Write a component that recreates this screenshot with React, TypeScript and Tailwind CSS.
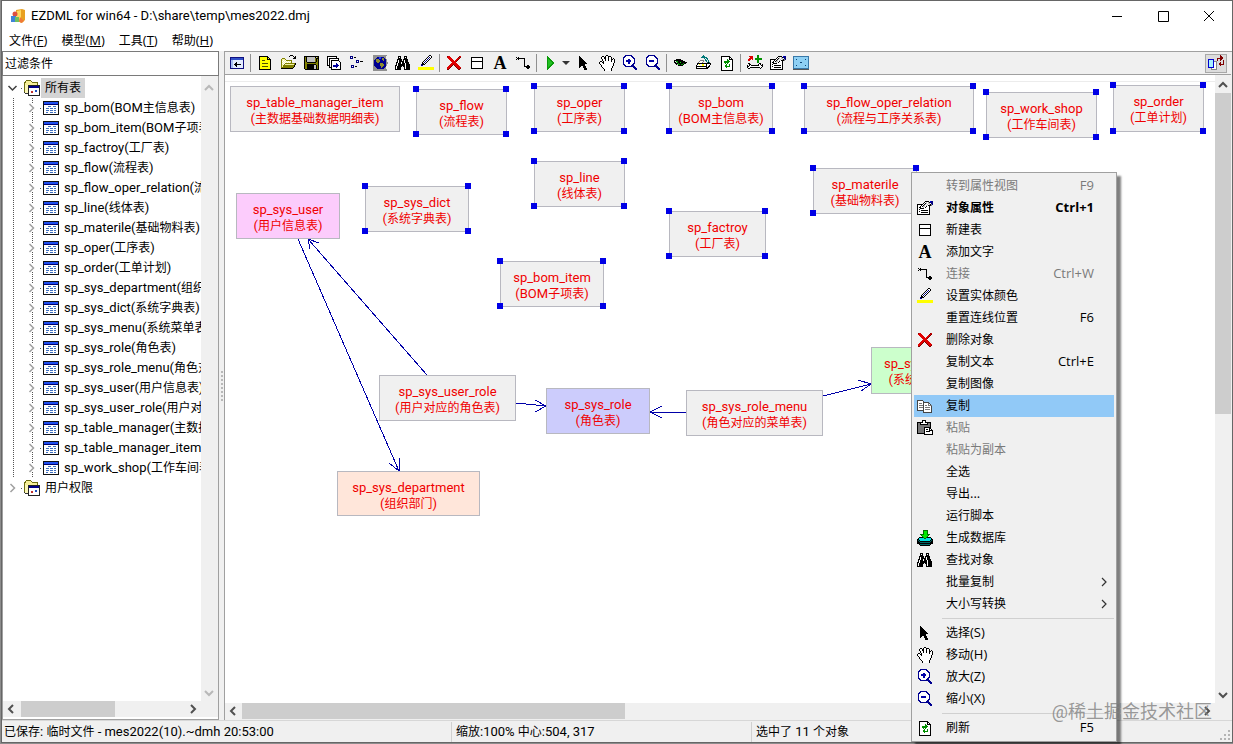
import React from "react";

// Shared types
interface TableNode {
  name: string;
  comment: string;
  x: number;
  y: number;
  w: number;
  h?: number;
  fill?: string;
  selected?: boolean;
}

interface MenuEntry {
  label?: string;
  icon?: React.ReactNode;
  shortcut?: string;
  disabled?: boolean;
  bold?: boolean;
  active?: boolean;
  submenu?: boolean;
  separator?: boolean;
}

// Palette for the 16 colour toolbar bitmaps
const palette: Record<string, string> = {
  k: "#000000",
  w: "#ffffff",
  y: "#ffff00",
  o: "#808000",
  p: "#f4f3a0",
  b: "#0000ff",
  n: "#000080",
  g: "#808080",
  s: "#c0c0c0",
  r: "#e00000",
  m: "#800000",
  e: "#009000",
  l: "#00ee00",
  c: "#00e0e0",
  t: "#007878",
};

const Sprite = ({ rows }: { rows: string[] }) => (
  <svg width="16" height="16" viewBox="0 0 16 16" shapeRendering="crispEdges" className="shrink-0">
    {rows.flatMap((row, y) =>
      [...row].map((ch, x) =>
        palette[ch] ? (
          <rect key={`${x}-${y}`} x={x} y={y} width="1" height="1" fill={palette[ch]} />
        ) : null
      )
    )}
  </svg>
);

const Svg = ({ children }: { children: React.ReactNode }) => (
  <svg width="16" height="16" viewBox="0 0 16 16" fill="none" shapeRendering="crispEdges" className="shrink-0">
    {children}
  </svg>
);

const HandIcon = () => (
  <Sprite
    rows={[
      ".......kk.......",
      "...kk.kwwkkk....",
      "..kwwkkwwkwwk...",
      "..kwwkkwwkwwk.k.",
      "...kwwkwwkwwkkwk",
      "...kwwkwwkwwkwwk",
      ".kk.kwwwwwwwkwwk",
      "kwwkkwwwwwwwwwwk",
      "kwwwkwwwwwwwwwk.",
      ".kwwwwwwwwwwwwk.",
      "..kwwwwwwwwwwwk.",
      "..kwwwwwwwwwwk..",
      "...kwwwwwwwwwk..",
      "....kwwwwwwwk...",
      ".....kwwwwwwk...",
      ".....kwwwwwwk...",
    ]}
  />
);

const CursorIcon = () => (
  <Sprite
    rows={[
      "................",
      "...k............",
      "...kk...........",
      "...kkk..........",
      "...kkkk.........",
      "...kkkkk........",
      "...kkkkkk.......",
      "...kkkkkkk......",
      "...kkkkkkkk.....",
      "...kkkkkk.......",
      "...kkkkkk.......",
      "...kk..kkk......",
      "...k...kkk......",
      "........kkk.....",
      "........kkk.....",
    ]}
  />
);

const FindIcon = () => (
  <Sprite
    rows={[
      "................",
      "...kkk...kkk....",
      "...kwk...kwk....",
      "...kkk...kkk....",
      "..kkkkk.kkkkk...",
      "..kwkkk.kwkkk...",
      "..kwkkkkkwkkk...",
      ".kkwkkwkkwkkkk..",
      ".kwkkkwkkkwkkk..",
      ".kwkkkkkkkwkkkk.",
      "kkwkkkkkkkwkkkk.",
      "kwkkkkk.kkwkkkk.",
      "kwkkkk...kwkkkk.",
      "kwkkkk...kwkkkk.",
      "kkkkkk...kkkkkk.",
    ]}
  />
);

const PenIcon = () => (
  <Sprite
    rows={[
      "...........kk...",
      "..........kwwk..",
      ".........kwnwk..",
      "........kwnwk...",
      ".......kwnwk....",
      "......kwnwk.....",
      ".....kwnwk......",
      "....kwnwk.......",
      "....kkwk........",
      "...nkkk.........",
      "...nn...........",
      "................",
      "yyyyyyyyyyyyyyyy",
      "yyyyyyyyyyyyyyyy",
      "yyyyyyyyyyyyyyyy",
    ]}
  />
);

const DeleteIcon = () => (
  <Sprite
    rows={[
      "................",
      ".mrr.........mr.",
      ".rrrr.......mrm.",
      "..rrrr.....rrm..",
      "...rrrr...rrm...",
      "....rrrr.rrm....",
      ".....rrrrrm.....",
      "......rrrr......",
      ".....rrrrrr.....",
      "....rrrmrrrr....",
      "...rrrm.mrrrr...",
      "..rrrm...mrrrr..",
      ".rrrm.....mrrrr.",
      ".rrm.......mrrm.",
      ".mm.........mm..",
    ]}
  />
);

const OpenIcon = () => (
  <Sprite
    rows={[
      "..........kkk...",
      ".........k...k.k",
      "..............kk",
      "..ooo........kkk",
      ".opppo..........",
      ".opwpwoooooo....",
      ".owpwpwpwpwo....",
      ".opwpwpwpwpo....",
      ".owpwooooooooook",
      ".opwopppppppppok",
      ".opoooooooooook.",
      ".opoooooooooook.",
      ".ooooooooooook..",
      ".kkkkkkkkkkkk...",
    ]}
  />
);

const SaveIcon = () => (
  <Sprite
    rows={[
      "................",
      ".kkkkkkkkkkkkkkk",
      ".kokssssssssksok",
      ".kokssssssssokkk",
      ".kokssssssssokok",
      ".kokssssssssokok",
      ".kokssssssssokok",
      ".kookkkkkkkkkook",
      ".koooooooooooook",
      ".kookkkkkkkkkook",
      ".kookkkkkkksskok",
      ".kookkkkkkksskok",
      ".kookkkkkkksskok",
      ".kookkkkkkksskok",
      "..kkkkkkkkkkkkkk",
    ]}
  />
);

const PropertyIcon = () => (
  <Sprite
    rows={[
      "................",
      "........kkkk.bnn",
      ".......kwswsknnn",
      "......kwkswsswnn",
      "kkkkkkwkswswskgn",
      "kwwwkwkswswkkkg.",
      "kwwkwksswkwwk...",
      "kwkkwwswkwwwk...",
      "kwwkkkkwwwwwk...",
      "kwkwwwwwwwwwk...",
      "kwwwkkkkkkkwk...",
      "kwkwwwwwwwwwk...",
      "kwwwkkkkkkkwk...",
      "kwwwwwwwwwwwk...",
      "kkkkkkkkkkkkk...",
    ]}
  />
);

const NewTableIcon = () => (
  <Svg>
    <path d="M2.5 2.5h11v11h-11zM2.5 6.5h11" stroke="#000" fill="#fff" />
  </Svg>
);

const TextIcon = () => (
  <svg width="16" height="16" viewBox="0 0 16 16" className="shrink-0">
    <text x="8" y="14" textAnchor="middle" fontFamily="Liberation Serif, serif" fontWeight="bold" fontSize="18">
      A
    </text>
  </svg>
);

const LinkIcon = () => (
  <Sprite
    rows={[
      "................",
      "................",
      ".k.k............",
      "..kkkkkkkk......",
      ".k.k.....k......",
      ".........k......",
      ".........k......",
      ".........k......",
      ".........k......",
      ".........k......",
      ".........k..kk..",
      ".........kkkkkk.",
      "...........kkkk.",
      "............kk..",
    ]}
  />
);

const ZoomIcon = ({ plus }: { plus?: boolean }) => (
  <Svg>
    <path d="M4 .5h5l3 3v5l-3 3h-5l-3-3v-5z" stroke="#000090" fill="#fff" />
    <path d="M4 5h5v2h-5z" fill="#0000a8" />
    {plus && <path d="M5.500 3.500h2v5h-2z" fill="#0000a8" />}
    <path d="M10 10l5 5" stroke="#000090" strokeWidth="2.500" />
  </Svg>
);

const RefreshIcon = () => (
  <Svg>
    <path d="M2.500 1.500h8l3 3v11h-11z" stroke="#000" fill="#fff" />
    <path d="M10.500 1.500v3h3" stroke="#000" />
    <path d="M5 8v-2h3v-2l3 3l-3 2v-1.500h-1.500v1.500zM11 9v3h-3v2l-3-3l3-2v1.500h1.500v-1.500z" fill="#009000" />
  </Svg>
);

const CopyIcon = () => (
  <Svg>
    <path d="M.5 2.500h5l3 3v7h-8z" stroke="#444" fill="#fff" />
    <path d="M2 5.500h3M2 7.500h4M2 9.500h4" stroke="#777" />
    <path d="M6.500 4.500h5l3 3v7h-8z" stroke="#444" fill="#fff" />
    <path d="M11.500 4.500v3h3M8 7.500h2M8 9.500h5M8 11.500h5" stroke="#777" />
  </Svg>
);

const PasteIcon = () => (
  <Svg>
    <path d="M.5 2.500h13v11h-13z" stroke="#000" fill="#777" />
    <path d="M3.500 4.500v-2h2v-2h3v2h2v2z" stroke="#000" fill="#fff" />
    <path d="M7.500 7.500h5l3 3v4h-8z" stroke="#000" fill="#fff" />
    <path d="M9 9.500h2M9 11.500h4M12.500 8v2.500h2.500" stroke="#000" />
  </Svg>
);

const GenerateIcon = () => (
  <Svg>
    <path d="M1 8h14v4l-2 3h-10l-2-3z" fill="#006868" />
    <path d="M3 7h10l2 2l-2 2h-10l-2-2z" fill="#00e0e0" stroke="#000" />
    <path d="M1 11.500l2 2h10l2-2M0.500 9v4l3 2.500h9l3-2.500v-4" stroke="#000" />
    <path d="M6 0h4v4h3l-5 5l-5-5h3z" fill="#00e800" stroke="#007000" />
  </Svg>
);

const PanelIcon = () => (
  <Svg>
    <path d="M1.500 2.500h13v11h-13z" stroke="#101080" fill="#fff" />
    <path d="M2 3h12v2h-12z" fill="#3050c8" />
    <path d="M2 5h2v8h-2z" fill="#a8c0f4" />
    <path d="M4 5h10v8h-10z" fill="#e4ecff" />
    <path d="M6 9.500h6" stroke="#000" />
    <path d="M5 9h1v1h-1zM6 8h1v3h-1zM7 7h1v5h-1z" fill="#000" />
  </Svg>
);

const NewIcon = () => (
  <Svg>
    <path d="M2.500 1.500h8l3 3v10h-11z" stroke="#000" fill="#ffff00" />
    <path d="M10.500 1.500v3h3" stroke="#000" />
    <path d="M5 5.500h3M5 8.500h6M5 11.500h6" stroke="#505000" />
  </Svg>
);

const CascadeIcon = () => (
  <Svg>
    <path d="M1.500 1.500h9v9h-9z" stroke="#000" fill="#fff" />
    <path d="M3.500 3.500h9v9h-9z" stroke="#000" fill="#fff" />
    <path d="M5.500 5.500h7l2 2v7h-9z" stroke="#000" fill="#fff" />
    <path d="M7 10.500h4" stroke="#0000a0" strokeWidth="2" />
    <path d="M10 8l3 2.500l-3 3z" fill="#0000a0" />
  </Svg>
);

const NodesIcon = () => (
  <Sprite
    rows={[
      "................",
      ".nnn............",
      ".nwn.kk.........",
      ".nnn............",
      "................",
      ".......nnn......",
      ".......nwn.kkk..",
      ".......nnn......",
      "................",
      "................",
      "..nnn...........",
      "..nwn.kk........",
      "..nnn...........",
    ]}
  />
);

const GlobeIcon = () => (
  <Svg>
    <path d="M1 0h14l-1 2l2 6l-2 4l1 4h-14z" fill="#909090" />
    <path d="M5 2h6l3 3v6l-3 3h-6l-3-3v-6z" fill="#000090" />
    <path d="M4 4h3l1 2l-2 2l-2-1zM8 8h3l1 2l-2 3h-1zM10 3h2v3h-1z" fill="#8c8c30" />
    <path d="M7 2h2v2h-2z" fill="#2040ff" />
  </Svg>
);

const PlayIcon = () => (
  <Svg>
    <path d="M4 1v14l8-7z" fill="#0a9a0a" />
    <path d="M5 4v8l5-4z" fill="#22c022" />
  </Svg>
);

const EyeIcon = () => (
  <Sprite
    rows={[
      "................",
      "................",
      "................",
      "................",
      "...kkkkk........",
      ".kkkkkkkkk......",
      ".k.eekkkkkkk....",
      ".kksekklkkkkkk..",
      "..kkkekkkkekk...",
      "...kseekeek.....",
      ".....kkkkk......",
    ]}
  />
);

const ExportIcon = () => (
  <Sprite
    rows={[
      ".......t........",
      "......ttt.......",
      ".....tttttt.....",
      "........t.tt....",
      ".........t.t....",
      "....gggg.tt.t...",
      "...gwwwg..t.t...",
      "..gwwwg....tkt..",
      ".kkkkkkkkkkkkkk.",
      ".kwywwyywwkwwwk.",
      "kwwwwwyywwkwwk..",
      "kkkkkkkkkkkwkk..",
      "kwwwwwwwwwkkk...",
      "kkkkkkkkkkkk....",
    ]}
  />
);

const ToolsIcon = () => (
  <Sprite
    rows={[
      "..........ee....",
      "..rrrr....ee....",
      "...rrr....ee....",
      "..rrrr..eeeeeee.",
      ".rrr.r..eeeeeee.",
      ".rr.......ee....",
      "..........ee....",
      "..........ee....",
      ".kk.........kk..",
      "..kk.......kwk.k",
      "k.kwkkkkkkkkwwkk",
      "kkwwwwwwwwwwwwwk",
      "kwwkkkkkkkkkkwk.",
      ".kk..........k..",
    ]}
  />
);

const ScreenIcon = () => (
  <Svg>
    <path d="M.5 1.500h15v12h-15z" stroke="#3878a8" fill="#8ed0f4" />
    <path d="M0 14.500h16" stroke="#555" />
    <path d="M3 4h1v1h-1zM12 4h1v1h-1zM7 7h2v1h-2zM3 10h1v1h-1zM12 10h1v1h-1z" fill="#104878" />
  </Svg>
);

const SwitchIcon = () => (
  <svg width="18" height="16" viewBox="0 0 18 16" fill="none" shapeRendering="crispEdges" className="shrink-0">
    <path d="M4.500 6.500h5v8h-5z" stroke="#888" fill="#fff" />
    <path d="M1.500 4.500h5v8h-5z" stroke="#0000d0" fill="#a8f0ff" />
    <path d="M10.500 6v-3h3M16.500 5v4h-3" stroke="#800000" />
    <path d="M13 0l3 3l-3 3zM14 6l-3 3l3 3z" fill="#800000" />
  </svg>
);

const AppIcon = () => (
  <svg width="16" height="16" viewBox="0 0 16 16" className="shrink-0">
    <path d="M6 2l6-1l3 1v10l-3 3l-5-2z" fill="#e8a020" />
    <path d="M7 3l4-1v11l-4-1z" fill="#ffd860" />
    <circle cx="5" cy="6" r="2.500" fill="#e05040" />
    <path d="M1 8h5v6h-5z" fill="#3f83d8" />
    <path d="M5 9h4v5h-4z" fill="#6fc060" />
    <path d="M10 9l4 4l-3 2l-2-2z" fill="#f07838" />
  </svg>
);

const FolderIcon = () => (
  <svg width="17" height="16" viewBox="0 0 17 16" fill="none" shapeRendering="crispEdges" className="shrink-0">
    <path d="M.5 13v-10l2-2.500h4l2 2h5v3" stroke="#6c6c10" fill="#f6ef98" />
    <path d="M1 5h4v9h-4z" fill="#fbf6b8" />
    <path d="M.5 12.500l1 1h3" stroke="#333" />
    <path d="M4.500 5.500h11v10h-11z" stroke="#222" fill="#fff" />
    <path d="M5 6h10v2h-10z" fill="#000088" />
    <path d="M7 11h2v2h-2z" fill="#c03030" />
    <path d="M11 10h2v2h-2z" fill="#2050c0" />
  </svg>
);

const TableIcon = () => (
  <svg width="16" height="14" viewBox="0 0 16 14" fill="none" shapeRendering="crispEdges" className="shrink-0">
    <path d="M.5 .5h15v13h-15z" stroke="#111" fill="#fff" />
    <path d="M1 1h14v2h-14z" fill="#2050f0" />
    <path d="M1 3h14v1h-14z" fill="#000070" />
    <path d="M5 5.500h3M10 5.500h3M3 7.500h3M7 7.500h3M11 7.500h2M3 9.500h3M7 9.500h3M11 9.500h2M3 11.500h2M7 11.500h3M11 11.500h2" stroke="#4070c0" />
  </svg>
);

// Dotted guides and the expander in front of a child row
const Branch = () => (
  <svg width="40" height="20" viewBox="0 0 40 20" fill="none" className="shrink-0">
    <path d="M10.500 0v20M29.500 0v6M29.500 14v6" stroke="#555" strokeDasharray="1 1" shapeRendering="crispEdges" />
    <path d="M26.500 6l4 4l-4 4" stroke="#a0a0a0" strokeWidth="1.500" />
    <path d="M37 10.500h1" stroke="#555" />
  </svg>
);

const arrows = {
  up: "M4 10l4-4l4 4",
  down: "M4 6l4 4l4-4",
  left: "M10 4l-4 4l4 4",
  right: "M6 4l4 4l-4 4",
};

const ScrollArrow = ({ dir, muted }: { dir: keyof typeof arrows; muted?: boolean }) => (
  <button aria-label={`Scroll ${dir}`} className="flex size-4 shrink-0 items-center justify-center">
    <svg width="16" height="16" viewBox="0 0 16 16" fill="none">
      <path d={arrows[dir]} stroke={muted ? "#b8b8b8" : "#505050"} strokeWidth="2" />
    </svg>
  </button>
);

// Latin glyphs run one step larger than the Chinese ones beside them
const Label = ({ text }: { text: string }) => (
  <>
    {text.split(/([\x20-\x7e]+)/).map((part, i) =>
      i % 2 ? (
        <span key={i} className="text-[13px]">
          {part}
        </span>
      ) : (
        part
      )
    )}
  </>
);

const menus = [
  { text: "文件", key: "F" },
  { text: "模型", key: "M" },
  { text: "工具", key: "T" },
  { text: "帮助", key: "H" },
];

const tables = [
  "sp_bom(BOM主信息表)",
  "sp_bom_item(BOM子项表)",
  "sp_factroy(工厂表)",
  "sp_flow(流程表)",
  "sp_flow_oper_relation(流程与工序关系表)",
  "sp_line(线体表)",
  "sp_materile(基础物料表)",
  "sp_oper(工序表)",
  "sp_order(工单计划)",
  "sp_sys_department(组织部门)",
  "sp_sys_dict(系统字典表)",
  "sp_sys_menu(系统菜单表)",
  "sp_sys_role(角色表)",
  "sp_sys_role_menu(角色对应的菜单表)",
  "sp_sys_user(用户信息表)",
  "sp_sys_user_role(用户对应的角色表)",
  "sp_table_manager(主数据表)",
  "sp_table_manager_item(主数据基础数据明细表)",
  "sp_work_shop(工作车间表)",
];

const nodes: TableNode[] = [
  { name: "sp_table_manager_item", comment: "主数据基础数据明细表", x: 5, y: 11, w: 170 },
  { name: "sp_flow", comment: "流程表", x: 191, y: 14, w: 91, selected: true },
  { name: "sp_oper", comment: "工序表", x: 309, y: 11, w: 91, selected: true },
  { name: "sp_bom", comment: "BOM主信息表", x: 444, y: 11, w: 104, selected: true },
  { name: "sp_flow_oper_relation", comment: "流程与工序关系表", x: 579, y: 11, w: 170, selected: true },
  { name: "sp_work_shop", comment: "工作车间表", x: 761, y: 17, w: 111, selected: true },
  { name: "sp_order", comment: "工单计划", x: 888, y: 10, w: 91, h: 47, selected: true },
  { name: "sp_line", comment: "线体表", x: 309, y: 86, w: 91, selected: true },
  { name: "sp_sys_dict", comment: "系统字典表", x: 140, y: 111, w: 104, selected: true },
  { name: "sp_sys_user", comment: "用户信息表", x: 11, y: 118, w: 104, fill: "#fcccfc" },
  { name: "sp_bom_item", comment: "BOM子项表", x: 275, y: 186, w: 104, selected: true },
  { name: "sp_factroy", comment: "工厂表", x: 444, y: 136, w: 97, selected: true },
  { name: "sp_materile", comment: "基础物料表", x: 588, y: 93, w: 104, selected: true },
  { name: "sp_sys_user_role", comment: "用户对应的角色表", x: 154, y: 300, w: 137 },
  { name: "sp_sys_role", comment: "角色表", x: 321, y: 313, w: 104, fill: "#ccccfc" },
  { name: "sp_sys_role_menu", comment: "角色对应的菜单表", x: 461, y: 315, w: 137 },
  { name: "sp_sys_menu", comment: "系统菜单表", x: 646, y: 272, w: 104, h: 47, fill: "#ccffcc" },
  { name: "sp_sys_department", comment: "组织部门", x: 112, y: 396, w: 143, h: 45, fill: "#ffe6da" },
];

const contextMenu: MenuEntry[] = [
  { label: "转到属性视图", shortcut: "F9", disabled: true },
  { label: "对象属性", shortcut: "Ctrl+1", bold: true, icon: <PropertyIcon /> },
  { label: "新建表", icon: <NewTableIcon /> },
  { label: "添加文字", icon: <TextIcon /> },
  { label: "连接", shortcut: "Ctrl+W", disabled: true, icon: <LinkIcon /> },
  { label: "设置实体颜色", icon: <PenIcon /> },
  { label: "重置连线位置", shortcut: "F6" },
  { label: "删除对象", icon: <DeleteIcon /> },
  { label: "复制文本", shortcut: "Ctrl+E" },
  { label: "复制图像" },
  { label: "复制", active: true, icon: <CopyIcon /> },
  { label: "粘贴", disabled: true, icon: <PasteIcon /> },
  { label: "粘贴为副本", disabled: true },
  { label: "全选" },
  { label: "导出..." },
  { label: "运行脚本" },
  { label: "生成数据库", icon: <GenerateIcon /> },
  { label: "查找对象", icon: <FindIcon /> },
  { label: "批量复制", submenu: true },
  { label: "大小写转换", submenu: true },
  { separator: true },
  { label: "选择(S)", icon: <CursorIcon /> },
  { label: "移动(H)", icon: <HandIcon /> },
  { label: "放大(Z)", icon: <ZoomIcon plus /> },
  { label: "缩小(X)", icon: <ZoomIcon /> },
  { separator: true },
  { label: "刷新", shortcut: "F5", icon: <RefreshIcon /> },
];

const ToolButton = ({ label, children }: { label: string; children: React.ReactNode }) => (
  <button aria-label={label} className="flex h-[22px] w-[23px] shrink-0 items-center justify-center">
    {children}
  </button>
);

const ToolDivider = () => (
  <div className="flex h-[18px] w-[5px] shrink-0 justify-center">
    <div className="w-px bg-[#909090]" />
  </div>
);

function TitleBar() {
  return (
    <header className="flex h-[30px] shrink-0 items-center bg-white pl-2">
      <AppIcon />
      <h1 className="ml-[5px] flex-1 truncate">
        <Label text="EZDML for win64 - D:\share\temp\mes2022.dmj" />
      </h1>
      {["M3 8.500h10", "M3.500 3.500h10v10h-10z", "M3 3l10 10M13 3l-10 10"].map((d, i) => (
        <button
          key={d}
          aria-label={["Minimize", "Maximize", "Close"][i]}
          className="flex h-full w-[46px] items-center justify-center"
        >
          <svg width="16" height="16" viewBox="0 0 16 16" fill="none">
            <path d={d} stroke="#000" />
          </svg>
        </button>
      ))}
    </header>
  );
}

function TreePanel() {
  return (
    <aside className="flex w-[217px] shrink-0 flex-col">
      <input
        aria-label="过滤条件"
        defaultValue="过滤条件"
        className="h-[25px] shrink-0 border border-[#7a7a7a] bg-white px-0.5 pb-0.5 outline-none"
      />
      <div className="flex min-h-0 flex-1 flex-col border border-t-0 border-[#a0a0a0] bg-white">
        <div className="flex min-h-0 flex-1">
          <ul className="min-w-0 flex-1 overflow-hidden pt-0.5 whitespace-nowrap">
            <li>
              <button className="flex h-5 items-center">
                <svg width="21" height="20" viewBox="0 0 21 20" fill="none" className="shrink-0">
                  <path d="M5.500 8l4 4l4-4" stroke="#404040" strokeWidth="1.500" />
                  <path d="M18 10.500h1" stroke="#555" />
                </svg>
                <FolderIcon />
                <span className="h-5 bg-[#d4d4d4] px-1 leading-5">所有表</span>
              </button>
              <ul>
                {tables.map((table) => (
                  <li key={table}>
                    <button className="flex h-5 items-center">
                      <Branch />
                      <TableIcon />
                      <span className="ml-[5px] leading-5">
                        <Label text={table} />
                      </span>
                    </button>
                  </li>
                ))}
              </ul>
            </li>
            <li>
              <button className="flex h-5 items-center">
                <svg width="21" height="20" viewBox="0 0 21 20" fill="none" className="shrink-0">
                  <path d="M7.500 6l4 4l-4 4" stroke="#a0a0a0" strokeWidth="1.500" />
                  <path d="M18 10.500h1" stroke="#555" />
                </svg>
                <FolderIcon />
                <span className="px-1 leading-5">用户权限</span>
              </button>
            </li>
          </ul>
          <div className="flex w-[17px] shrink-0 flex-col justify-between bg-[#f0f0f0] pt-1">
            <ScrollArrow dir="up" muted />
            <ScrollArrow dir="down" muted />
          </div>
        </div>
        <div className="mb-0.5 flex h-4 shrink-0 items-center bg-[#f0f0f0] pr-[17px]">
          <ScrollArrow dir="left" />
          <div className="h-full flex-1 pl-0.5">
            <div className="h-full w-[94px] bg-[#cdcdcd]" />
          </div>
          <ScrollArrow dir="right" />
        </div>
      </div>
    </aside>
  );
}

function Toolbar() {
  return (
    <div className="flex h-[23px] shrink-0 items-center border-b border-[#a0a0a0]">
      <ToolButton label="Hide panel"><PanelIcon /></ToolButton>
      <ToolDivider />
      <ToolButton label="New"><NewIcon /></ToolButton>
      <ToolButton label="Open"><OpenIcon /></ToolButton>
      <ToolButton label="Save"><SaveIcon /></ToolButton>
      <ToolButton label="Models"><CascadeIcon /></ToolButton>
      <ToolButton label="Layout"><NodesIcon /></ToolButton>
      <ToolButton label="Browse"><GlobeIcon /></ToolButton>
      <ToolButton label="Find"><FindIcon /></ToolButton>
      <ToolButton label="Color"><PenIcon /></ToolButton>
      <ToolDivider />
      <ToolButton label="Delete"><DeleteIcon /></ToolButton>
      <ToolButton label="New table"><NewTableIcon /></ToolButton>
      <ToolButton label="Add text"><TextIcon /></ToolButton>
      <ToolButton label="Link"><LinkIcon /></ToolButton>
      <ToolDivider />
      <ToolButton label="Run"><PlayIcon /></ToolButton>
      <button aria-label="Run options" className="flex w-2.5 shrink-0 items-center">
        <svg width="8" height="4" viewBox="0 0 8 4">
          <path d="M0 0h8l-4 4z" fill="#333" />
        </svg>
      </button>
      <ToolButton label="Select"><CursorIcon /></ToolButton>
      <ToolButton label="Move"><HandIcon /></ToolButton>
      <ToolButton label="Zoom in"><ZoomIcon plus /></ToolButton>
      <ToolButton label="Zoom out"><ZoomIcon /></ToolButton>
      <ToolDivider />
      <ToolButton label="Preview"><EyeIcon /></ToolButton>
      <ToolButton label="Export"><ExportIcon /></ToolButton>
      <ToolButton label="Refresh"><RefreshIcon /></ToolButton>
      <ToolDivider />
      <ToolButton label="Tools"><ToolsIcon /></ToolButton>
      <ToolButton label="Properties"><PropertyIcon /></ToolButton>
      <ToolButton label="Full screen"><ScreenIcon /></ToolButton>
      <button
        aria-label="Switch view"
        className="mr-1 ml-auto flex h-[19px] w-[22px] items-center justify-center border border-[#a8a8a8] bg-[#dcdcdc]"
      >
        <SwitchIcon />
      </button>
    </div>
  );
}

const Handle = ({ className }: { className: string }) => (
  <span className={`absolute size-1.5 bg-[#0000e6] ${className}`} />
);

function Diagram() {
  return (
    <div className="relative min-w-0 flex-1 overflow-hidden bg-white">
      <div className="mt-1.5 h-px bg-[#ececec]" />
      {/* Relations */}
      <svg width="990" height="628" className="absolute top-0 left-0" fill="none" stroke="#0000a8" shapeRendering="crispEdges">
        <path d="M73 164L174 396M164 388L174 396L175 383" />
        <path d="M202 300L83 164M85 174L83 164L94 168" />
        <path d="M291 328L321 331M310 325L321 331L310 337" />
        <path d="M461 337H425M437 331L425 337L437 343" />
        <path d="M598 321L646 309M633 305L646 309L636 316" />
      </svg>
      {nodes.map((node) => (
        <div
          key={node.name}
          className="absolute border border-[#b8b8c0] pt-2 text-center leading-4 whitespace-nowrap text-[#f00000]"
          style={{
            left: node.x,
            top: node.y,
            width: node.w,
            height: node.h ?? 46,
            backgroundColor: node.fill ?? "#f0f0f0",
          }}
        >
          <p><Label text={node.name} /></p>
          <p><Label text={`(${node.comment})`} /></p>
          {node.selected && (
            <>
              <Handle className="-top-1 -left-1" />
              <Handle className="-top-1 -right-[3px]" />
              <Handle className="-bottom-[3px] -left-1" />
              <Handle className="-right-[3px] -bottom-[3px]" />
            </>
          )}
        </div>
      ))}
    </div>
  );
}

function ContextMenu() {
  return (
    <div
      role="menu"
      className="absolute top-[171px] left-[909px] w-[206px] border border-[#a0a0a0] bg-[#f0f0f0] p-0.5 font-['Open_Sans','Noto_Sans_CJK_SC',sans-serif] shadow-[4px_4px_2px_rgba(0,0,0,0.5)]"
    >
      {contextMenu.map((item, i) =>
        item.separator ? (
          <div key={i} className="flex h-[7px] items-center pl-7">
            <div className="h-px flex-1 bg-[#d0d0d0]" />
          </div>
        ) : (
          <button
            key={i}
            role="menuitem"
            className={`flex h-[22px] w-full items-center pl-[3px] text-left whitespace-nowrap ${
              item.active ? "bg-[#91c9f7]" : ""
            } ${item.disabled ? "text-[#7a7a7a]" : "text-black"} ${item.bold ? "font-bold" : ""}`}
          >
            <span className="flex w-[29px] shrink-0">{item.icon}</span>
            <span className="flex-1"><Label text={item.label ?? ""} /></span>
            {item.shortcut && (
              <span className="mr-5"><Label text={item.shortcut} /></span>
            )}
            {item.submenu && (
              <svg width="16" height="16" viewBox="0 0 16 16" fill="none" className="mr-0.5">
                <path d="M6 4l4 4l-4 4" stroke="#333" strokeWidth="1.200" />
              </svg>
            )}
          </button>
        )
      )}
    </div>
  );
}

function StatusBar() {
  return (
    <footer className="flex h-[22px] shrink-0 items-center border-t border-[#d7d7d7] bg-[#f0f0f0] leading-5 whitespace-nowrap">
      <div className="w-[450px] border-r border-[#d0d0d0] pl-0.5">
        <Label text="已保存: 临时文件 - mes2022(10).~dmh 20:53:00" />
      </div>
      <div className="w-[300px] border-r border-[#d0d0d0] pl-1">
        <Label text="缩放:100% 中心:504, 317" />
      </div>
      <div className="flex-1 pl-1">
        <Label text="选中了 11 个对象" />
      </div>
      <svg width="12" height="12" viewBox="0 0 12 12" className="self-end">
        <path d="M8 0h2v2h-2zM4 4h2v2h-2zM8 4h2v2h-2zM0 8h2v2h-2zM4 8h2v2h-2zM8 8h2v2h-2z" fill="#b4b4b4" />
      </svg>
    </footer>
  );
}

export default function App() {
  return (
    <div className="h-screen overflow-hidden bg-[#8c8c8c] pb-px pl-px font-['Roboto','Noto_Sans_CJK_SC',sans-serif] text-xs text-black">
      <div className="relative flex h-full flex-col border border-[#666] bg-[#f0f0f0]">
        <TitleBar />

        <nav className="flex h-5 shrink-0 items-center bg-white font-['Open_Sans','Noto_Sans_CJK_SC',sans-serif]">
          {menus.map((menu) => (
            <button key={menu.key} className="px-[7px]">
              {menu.text}
              <span className="text-[13px]">
                (<u>{menu.key}</u>)
              </span>
            </button>
          ))}
        </nav>

        <div className="flex min-h-0 flex-1">
          <TreePanel />
          <div className="flex w-[5px] shrink-0 items-center justify-center">
            <div className="h-[30px] border-l-2 border-dotted border-[#b8b8b8]" />
          </div>
          <main className="flex min-w-0 flex-1 flex-col border-t border-l border-[#a0a0a0] pr-px">
            <Toolbar />
            <div className="flex min-h-0 flex-1">
              <Diagram />
              <div className="flex w-4 shrink-0 flex-col bg-[#f0f0f0] pt-0.5">
                <ScrollArrow dir="up" />
                <div className="flex-1">
                  <div className="h-[54%] bg-[#cdcdcd]" />
                </div>
                <ScrollArrow dir="down" />
              </div>
            </div>
            <div className="mb-px flex h-4 shrink-0 bg-[#f0f0f0] pr-4">
              <ScrollArrow dir="left" />
              <div className="flex-1 pl-px">
                <div className="h-full w-2/5 bg-[#cdcdcd]" />
              </div>
              <ScrollArrow dir="right" />
            </div>
          </main>
        </div>

        <StatusBar />
        <ContextMenu />
        <p className="absolute right-5 bottom-4 text-lg leading-7 text-[#808080]/80">@稀土掘金技术社区</p>
      </div>
    </div>
  );
}
